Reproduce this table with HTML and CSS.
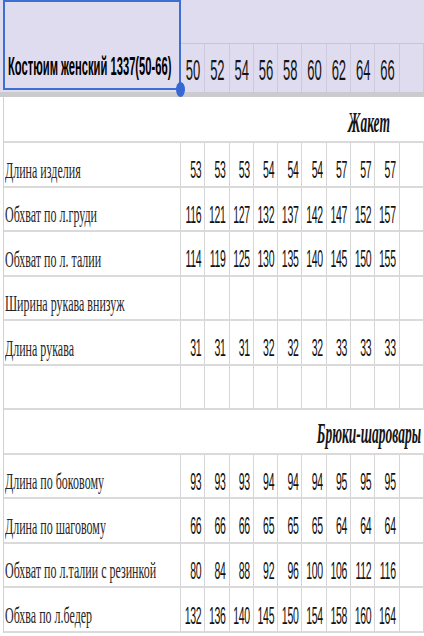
FILE: index.html
```html
<!DOCTYPE html>
<html lang="ru">
<head>
<meta charset="utf-8">
<title>Костюим женский 1337</title>
<link rel="stylesheet" href="styles.css">
</head>
<body>
<div class="head">
  <div class="hgrid">
    <div class="sel"><span class="title">Костюим женский 1337(50-66)</span><i class="handle"></i></div>
    <div class="htop"></div>
    <div class="hc"><span class="hn">50</span></div>
    <div class="hc"><span class="hn">52</span></div>
    <div class="hc"><span class="hn">54</span></div>
    <div class="hc"><span class="hn">56</span></div>
    <div class="hc"><span class="hn">58</span></div>
    <div class="hc"><span class="hn">60</span></div>
    <div class="hc"><span class="hn">62</span></div>
    <div class="hc"><span class="hn">64</span></div>
    <div class="hc"><span class="hn">66</span></div>
    <div class="hc"></div>
  </div>
</div>
<div class="grid">
  <div class="sec"><span class="st">Жакет</span></div>

  <div class="lab"><span class="lt">Длина изделия</span></div>
  <div class="c"><span class="n">53</span></div><div class="c"><span class="n">53</span></div><div class="c"><span class="n">53</span></div><div class="c"><span class="n">54</span></div><div class="c"><span class="n">54</span></div><div class="c"><span class="n">54</span></div><div class="c"><span class="n">57</span></div><div class="c"><span class="n">57</span></div><div class="c"><span class="n">57</span></div><div class="c"></div>

  <div class="lab"><span class="lt">Обхват по л.груди</span></div>
  <div class="c"><span class="n">116</span></div><div class="c"><span class="n">121</span></div><div class="c"><span class="n">127</span></div><div class="c"><span class="n">132</span></div><div class="c"><span class="n">137</span></div><div class="c"><span class="n">142</span></div><div class="c"><span class="n">147</span></div><div class="c"><span class="n">152</span></div><div class="c"><span class="n">157</span></div><div class="c"></div>

  <div class="lab"><span class="lt">Обхват по л. талии</span></div>
  <div class="c"><span class="n">114</span></div><div class="c"><span class="n">119</span></div><div class="c"><span class="n">125</span></div><div class="c"><span class="n">130</span></div><div class="c"><span class="n">135</span></div><div class="c"><span class="n">140</span></div><div class="c"><span class="n">145</span></div><div class="c"><span class="n">150</span></div><div class="c"><span class="n">155</span></div><div class="c"></div>

  <div class="lab"><span class="lt">Ширина рукава внизуж</span></div>
  <div class="c"></div><div class="c"></div><div class="c"></div><div class="c"></div><div class="c"></div><div class="c"></div><div class="c"></div><div class="c"></div><div class="c"></div><div class="c"></div>

  <div class="lab"><span class="lt">Длина рукава</span></div>
  <div class="c"><span class="n">31</span></div><div class="c"><span class="n">31</span></div><div class="c"><span class="n">31</span></div><div class="c"><span class="n">32</span></div><div class="c"><span class="n">32</span></div><div class="c"><span class="n">32</span></div><div class="c"><span class="n">33</span></div><div class="c"><span class="n">33</span></div><div class="c"><span class="n">33</span></div><div class="c"></div>

  <div class="lab"></div>
  <div class="c"></div><div class="c"></div><div class="c"></div><div class="c"></div><div class="c"></div><div class="c"></div><div class="c"></div><div class="c"></div><div class="c"></div><div class="c"></div>

  <div class="sec"><span class="st">Брюки-шаровары</span></div>

  <div class="lab"><span class="lt">Длина по боковому</span></div>
  <div class="c"><span class="n">93</span></div><div class="c"><span class="n">93</span></div><div class="c"><span class="n">93</span></div><div class="c"><span class="n">94</span></div><div class="c"><span class="n">94</span></div><div class="c"><span class="n">94</span></div><div class="c"><span class="n">95</span></div><div class="c"><span class="n">95</span></div><div class="c"><span class="n">95</span></div><div class="c"></div>

  <div class="lab"><span class="lt">Длина по шаговому</span></div>
  <div class="c"><span class="n">66</span></div><div class="c"><span class="n">66</span></div><div class="c"><span class="n">66</span></div><div class="c"><span class="n">65</span></div><div class="c"><span class="n">65</span></div><div class="c"><span class="n">65</span></div><div class="c"><span class="n">64</span></div><div class="c"><span class="n">64</span></div><div class="c"><span class="n">64</span></div><div class="c"></div>

  <div class="lab"><span class="lt">Обхват по л.талии с резинкой</span></div>
  <div class="c"><span class="n">80</span></div><div class="c"><span class="n">84</span></div><div class="c"><span class="n">88</span></div><div class="c"><span class="n">92</span></div><div class="c"><span class="n">96</span></div><div class="c"><span class="n">100</span></div><div class="c"><span class="n">106</span></div><div class="c"><span class="n">112</span></div><div class="c"><span class="n">116</span></div><div class="c"></div>

  <div class="lab"><span class="lt">Обхва по л.бедер</span></div>
  <div class="c"><span class="n">132</span></div><div class="c"><span class="n">136</span></div><div class="c"><span class="n">140</span></div><div class="c"><span class="n">145</span></div><div class="c"><span class="n">150</span></div><div class="c"><span class="n">154</span></div><div class="c"><span class="n">158</span></div><div class="c"><span class="n">160</span></div><div class="c"><span class="n">164</span></div><div class="c"></div>
</div>
</body>
</html>
```

FILE: styles.css
```css
* { box-sizing: border-box; }

html, body {
  margin: 0;
  padding: 0;
  background: #ffffff;
}

body {
  width: 424px;
  height: 636px;
  overflow: hidden;
  font-family: "Liberation Sans", Arial, sans-serif;
  color: #111111;
}

/* ---------- header (frozen rows) ---------- */
.head {
  background: #e0dcf0;
  border-bottom: 5px solid #cacaCf;
}

.hgrid {
  display: grid;
  padding-left: 3px;
  grid-template-columns: 178px repeat(10, 1fr);
  grid-template-rows: 44px 48px;
}

.sel {
  position: relative;
  grid-column: 1;
  grid-row: 1 / 3;
  align-self: start;
  height: 90px;
  border: 2px solid #3d6fd2;
  display: flex;
  align-items: flex-end;
  padding: 0 0 10px 3px;
  z-index: 2;
}

.title {
  display: inline-block;
  font-weight: bold;
  font-size: 11.2px;
  line-height: 1;
  white-space: nowrap;
  color: #000;
  transform: scaleY(2.25);
  transform-origin: 0 85%;
}

.handle {
  position: absolute;
  right: -6px;
  bottom: -9px;
  width: 9px;
  height: 15px;
  border-radius: 50%;
  background: #3568d4;
}

.htop {
  grid-column: 2 / -1;
  grid-row: 1;
  border-bottom: 1px solid #c8c5da;
}

.hc {
  grid-row: 2;
  border-right: 1px solid #cdcadd;
  display: flex;
  justify-content: flex-end;
  align-items: flex-end;
  padding: 0 4px 10px 0;
}

.hn {
  display: inline-block;
  font-size: 13px;
  line-height: 1;
  color: #141414;
  transform: scaleY(2.2);
  transform-origin: 50% 85%;
}

/* ---------- body grid ---------- */
.grid {
  display: grid;
  margin-left: 3px;
  border-left: 1px solid #d2d2d2;
  grid-template-columns: 177px repeat(10, 1fr);
  grid-template-rows: 46px repeat(11, 44.55px);
}

.sec {
  grid-column: 1 / -1;
  display: flex;
  justify-content: flex-end;
  align-items: flex-end;
  border-bottom: 2px solid #dadada;
  padding-bottom: 6px;
}

.st {
  display: inline-block;
  width: 110px;
  text-align: center;
  font-family: "Liberation Serif", "Times New Roman", serif;
  font-weight: bold;
  font-style: italic;
  font-size: 13.5px;
  line-height: 1;
  white-space: nowrap;
  color: #151515;
  transform: scaleY(2.15);
  transform-origin: 50% 85%;
}

.lab {
  border-right: 1px solid #d6d6d6;
  border-bottom: 2px solid #dadada;
  display: flex;
  align-items: flex-end;
  padding: 0 0 6px 1px;
}

.lt {
  display: inline-block;
  font-family: "Liberation Serif", "Times New Roman", serif;
  font-size: 12px;
  line-height: 1;
  white-space: nowrap;
  color: #262626;
  transform: scaleY(1.95);
  transform-origin: 0 85%;
}

.c {
  border-right: 1px solid #d6d6d6;
  border-bottom: 2px solid #dadada;
  display: flex;
  justify-content: flex-end;
  align-items: flex-end;
  padding: 0 3px 6px 0;
}

.n {
  display: inline-block;
  font-size: 10.5px;
  line-height: 1;
  letter-spacing: -0.3px;
  color: #121212;
  transform: scaleY(2.25);
  transform-origin: 50% 85%;
}
```
